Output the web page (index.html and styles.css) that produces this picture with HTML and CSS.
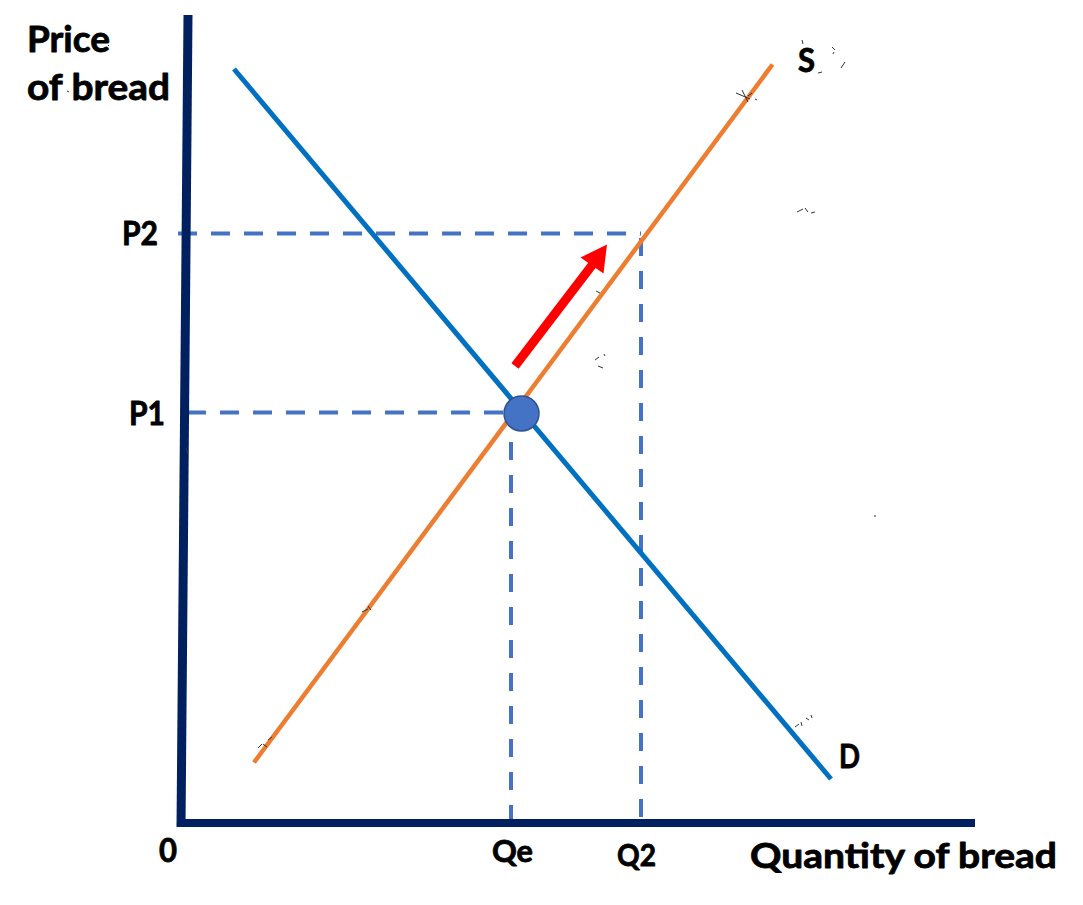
FILE: index.html
```html
<!DOCTYPE html>
<html lang="en">
<head>
<meta charset="utf-8">
<title>Supply and demand for bread</title>
<link rel="stylesheet" href="styles.css">
</head>
<body>
<div class="chart">
<svg class="chart-svg" width="1083" height="905" viewBox="0 0 1083 905" xmlns="http://www.w3.org/2000/svg">
  <!-- dashed guides -->
  <line class="guide-h" x1="178" y1="233.5" x2="641" y2="233.5"/>
  <line class="guide-h" x1="187" y1="412.5" x2="506" y2="412.5"/>
  <line class="guide-v" x1="511" y1="409" x2="511" y2="823"/>
  <line class="guide-v" x1="641" y1="238" x2="641" y2="823"/>

  <!-- curves -->
  <line class="demand" x1="234" y1="69" x2="831" y2="779"/>
  <line class="supply" x1="254" y1="762.5" x2="772.5" y2="64.5"/>

  <!-- axes -->
  <line class="axis" x1="188" y1="15" x2="181" y2="827"/>
  <line class="axis axis-x" x1="177" y1="823" x2="975" y2="823"/>

  <!-- equilibrium point -->
  <circle class="eq-point" cx="521.5" cy="413.5" r="17.5"/>

  <!-- arrow -->
  <line class="arrow-shaft" x1="515" y1="366" x2="596" y2="260"/>
  <polygon class="arrow-head" points="607,244.5 580.5,257.5 603.5,273.5"/>

  <!-- small scan marks -->
  <g class="marks">
    <path d="M736 93 l14 6 M742 90 l6 12 M748 96 l4 -3 M755 99 l2 1"/>
    <path d="M802 40 l1 4 M832 47 l3 3 M833 54 l1 -2 M841 68 l4 -6 M818 73 l4 -1"/>
    <path d="M797 212 l6 -3 M805 208 l3 4 M811 213 l4 -1"/>
    <path d="M595 360 l4 -3 M598 366 l5 2 M604 354 l1 2"/>
    <path d="M596 291 l4 2"/>
    <path d="M362 612 l6 -3 M368 606 l3 4"/>
    <path d="M258 748 l4 -4 M263 744 l4 3 M268 740 l4 -3"/>
    <path d="M795 727 l4 -3 M801 722 l1 4 M806 718 l3 2 M811 715 l1 3"/>
    <path d="M874 516 l2 0 M186 448 l2 6"/>
    <path d="M108 45 l1 1 M67 91 l2 1"/>
  </g>

  <!-- labels -->
  <text class="lbl lbl-title" x="27" y="52" textLength="83" lengthAdjust="spacingAndGlyphs">Price</text>
  <text class="lbl lbl-title" x="27" y="100" textLength="143" lengthAdjust="spacingAndGlyphs">of bread</text>
  <text class="lbl lbl-tick" x="122" y="245" textLength="36" lengthAdjust="spacingAndGlyphs">P2</text>
  <text class="lbl lbl-tick" x="129" y="425" textLength="36" lengthAdjust="spacingAndGlyphs">P1</text>
  <text class="lbl lbl-tick" x="798" y="72" textLength="17" lengthAdjust="spacingAndGlyphs">S</text>
  <text class="lbl lbl-tick" x="839" y="768" textLength="21" lengthAdjust="spacingAndGlyphs">D</text>
  <text class="lbl lbl-tick" x="159" y="862" textLength="18" lengthAdjust="spacingAndGlyphs">0</text>
  <text class="lbl lbl-q" x="492" y="862" textLength="41" lengthAdjust="spacingAndGlyphs">Qe</text>
  <text class="lbl lbl-q" x="617" y="866" textLength="39" lengthAdjust="spacingAndGlyphs">Q2</text>
  <text class="lbl lbl-axis" x="750" y="868" textLength="307" lengthAdjust="spacingAndGlyphs">Quantity of bread</text>
</svg>
</div>
</body>
</html>
```

FILE: styles.css
```css
html, body {
  margin: 0;
  padding: 0;
  background: #ffffff;
}

.chart {
  width: 1083px;
  height: 905px;
  overflow: hidden;
}

.chart-svg {
  display: block;
}

.axis {
  stroke: #002060;
  stroke-width: 9;
  stroke-linecap: butt;
}

.axis-x {
  stroke-width: 8;
}

.demand {
  stroke: #0070C0;
  stroke-width: 5;
}

.supply {
  stroke: #ED7D31;
  stroke-width: 4.5;
}

.guide-h,
.guide-v {
  stroke: #4472C4;
  stroke-width: 4;
  fill: none;
}

.guide-h {
  stroke-dasharray: 19 14;
}

.guide-v {
  stroke-dasharray: 18 15;
}

.eq-point {
  fill: #4472C4;
  stroke: #2F528F;
  stroke-width: 1.5;
}

.arrow-shaft {
  stroke: #FF0000;
  stroke-width: 9;
}

.arrow-head {
  fill: #FF0000;
}

.marks path {
  stroke: #333333;
  stroke-width: 1;
  fill: none;
}

.lbl {
  font-family: Lato, "Open Sans", "DejaVu Sans", sans-serif;
  font-weight: 700;
  fill: #000000;
  stroke: #000000;
  stroke-width: 0.8;
  stroke-linejoin: round;
}

.lbl-title {
  font-size: 37px;
}

.lbl-tick {
  font-size: 32px;
}

.lbl-q {
  font-size: 30px;
}

.lbl-axis {
  font-size: 35px;
}
```
